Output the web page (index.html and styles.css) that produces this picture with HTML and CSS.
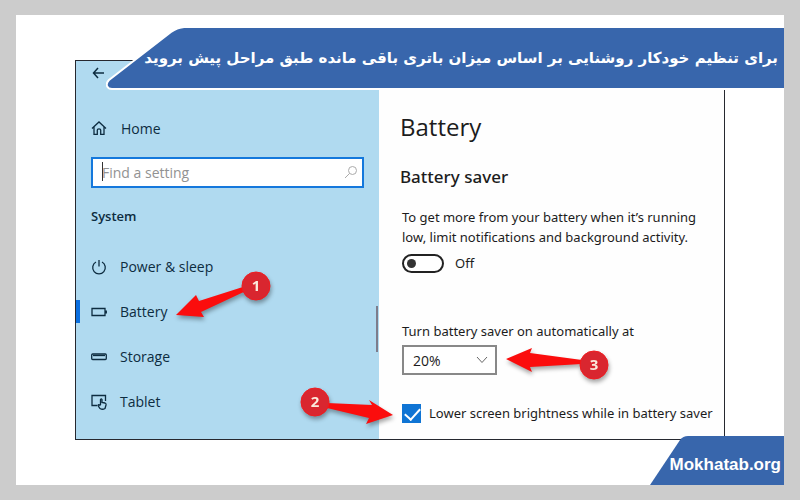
FILE: index.html
```html
<!DOCTYPE html>
<html lang="en">
<head>
  <meta charset="UTF-8" />
  <meta name="viewport" content="width=device-width, initial-scale=1.0" />
  <title>Battery saver settings</title>
  <link rel="stylesheet" href="styles.css">
</head>
<body>
  <div class="slide">
    <div class="window">
      <aside class="sidebar">
        <button class="back" type="button" aria-label="Back">
          <svg width="14" height="12" viewBox="0 0 14 12"><path d="M6 1 L1.500 6 L6 11 M1.500 6 H12" /></svg>
        </button>

        <a class="home" href="#">
          <svg class="icon" width="16" height="16" viewBox="0 0 16 16"><path d="M1 8.500 L8 2 L15 8.500 M3 7 V14.300 H6.300 V10 Q6.300 8.800 8 8.800 Q9.700 8.800 9.700 10 V14.300 H13 V7" /></svg>
          <span>Home</span>
        </a>

        <div class="search">
          <input type="text" placeholder="Find a setting" aria-label="Find a setting">
          <span class="caret"></span>
          <svg class="search-icon" width="14" height="14" viewBox="0 0 14 14"><circle cx="8.500" cy="5.500" r="4" /><path d="M5.600 8.400 L1 13" /></svg>
        </div>

        <h2 class="group">System</h2>
        <nav class="menu">
          <a href="#">
            <svg class="icon" width="16" height="16" viewBox="0 0 16 16"><path d="M5 3 A6.300 6.300 0 1 0 11 3 M8 1 V7.500" /></svg>
            <span>Power &amp; sleep</span>
          </a>
          <a class="active" href="#">
            <svg class="icon" width="16" height="16" viewBox="0 0 16 16"><path d="M1 4.500 H14 V11.500 H1 Z M15.300 6.500 V9.500" /></svg>
            <span>Battery</span>
            <svg class="callout callout-1" width="100" height="50" viewBox="0 0 100 50">
              <path d="M2 47 L22 27 L25 33 L72 18 L74 22 L27 44 L30 49 Z" />
              <circle cx="82" cy="18" r="14" />
              <text x="82" y="23">1</text>
            </svg>
          </a>
          <a href="#">
            <svg class="icon" width="16" height="16" viewBox="0 0 16 16"><rect x="0.700" y="5" width="14.600" height="5.500" rx="1" /><path d="M2 6.500 H14" /></svg>
            <span>Storage</span>
          </a>
          <a href="#">
            <svg class="icon" width="16" height="16" viewBox="0 0 16 16"><path d="M6 11.500 H1 V1.500 H14.500 V7 M9.500 11 V5.500 Q10.300 4.300 11 5.500 V8.500 L14 9 Q15.300 9.500 15 11 L14 14.500 Q11.500 16 9 14.500 L7 11.500 Q7.300 10 9.500 11.500" /></svg>
            <span>Tablet</span>
          </a>
        </nav>
        <div class="scrollbar"></div>
      </aside>

      <main class="content">
        <h1>Battery</h1>
        <h2>Battery saver</h2>
        <div class="settings">
          <p>To get more from your battery when it’s running<br>low, limit notifications and background activity.</p>
          <div class="toggle-row">
            <input type="checkbox" role="switch" id="saver" class="toggle">
            <label for="saver">Off</label>
          </div>

          <label class="level-label" for="level">Turn battery saver on automatically at</label>
          <div class="level">
            <select id="level">
              <option>10%</option>
              <option selected>20%</option>
              <option>30%</option>
            </select>
            <svg class="chevron" width="12" height="8" viewBox="0 0 12 8"><path d="M1 1 L6 6.500 L11 1" /></svg>
            <svg class="callout callout-3" width="110" height="40" viewBox="0 0 110 40">
              <path d="M2 16 L28 5 L26 10 L78 17 L78 21 L26 24 L28 29 Z" />
              <circle cx="90" cy="22" r="14" />
              <text x="90" y="27">3</text>
            </svg>
          </div>

          <div class="check-row">
            <input type="checkbox" id="brightness" class="check" checked>
            <label for="brightness">Lower screen brightness while in battery saver</label>
            <svg class="callout callout-2" width="96" height="54" viewBox="0 0 96 54">
              <path d="M94 30 L70 15 L73 20 L28 18 L28 23 L70 33 L67 39 Z" />
              <circle cx="16" cy="17" r="14" />
              <text x="16" y="22">2</text>
            </svg>
          </div>
        </div>
      </main>
    </div>

    <header class="banner">
      <svg class="banner-edge" width="86" height="63" viewBox="0 -1 86 63">
        <path class="fill" d="M86 0 H78 Q71 0 65 4 L3 52 Q0 55 1 58 Q2 61 6 61 H86 Z" />
        <path class="line" d="M86 -1 H78 Q71 -0.500 65 4 L3 52 Q0 55 1 58 Q2 61 6 61 H86" />
      </svg>
      <p lang="fa" dir="rtl">برای تنظیم خودکار روشنایی بر اساس میزان باتری باقی مانده طبق مراحل پیش بروید</p>
    </header>

    <footer class="site">
      <svg width="134" height="49" viewBox="0 0 134 49"><path d="M0 49 L30 4 Q33 0 38 0 H134 V49 Z" /></svg>
      <a href="#">Mokhatab.org</a>
    </footer>
  </div>
</body>
</html>
```

FILE: styles.css
```css
* {
  box-sizing: border-box;
}
body {
  margin: 0;
  padding: 15px 16px;
  min-height: 100vh;
  display: flex;
  background-color: #ccc;
  font-family: "Noto Sans", "Open Sans", sans-serif;
  font-size: 13px;
  color: #1c1c1c;
}
h1, h2, p {
  margin: 0;
}
a {
  color: inherit;
  text-decoration: none;
}
svg {
  display: block;
  fill: none;
  stroke: currentColor;
}
.slide {
  position: relative;
  flex: 1;
  min-width: 0;
  padding: 45px 59px;
  background: white;
}
.window {
  display: flex;
  min-height: 380px;
  border: 1px solid #26282f;
  background: #fefefe;
}

/* left panel */
.sidebar {
  position: relative;
  flex: 0 0 303px;
  padding: 0 15px 12px;
  background: #b0daf0;
  color: #0d2c40;
  font-family: "Open Sans", sans-serif;
  font-size: 14px;
}
.back {
  display: flex;
  align-items: center;
  height: 24px;
  padding: 0 1px;
  border: 0;
  background: none;
  color: inherit;
}
.back svg {
  stroke-width: 1.5;
}
.home {
  display: flex;
  align-items: center;
  gap: 14px;
  height: 30px;
  margin-top: 28px;
}
.icon {
  flex: none;
  stroke-width: 1.3;
}
.search {
  position: relative;
  margin-top: 14px;
}
.search input {
  display: block;
  width: 100%;
  height: 31px;
  padding: 0 32px 0 9px;
  border: 2px solid #1478dc;
  border-radius: 0;
  background: white;
  font: inherit;
}
.search input::placeholder {
  color: #929292;
  opacity: 1;
}
.caret {
  position: absolute;
  left: 11px;
  top: 5px;
  width: 1px;
  height: 19px;
  background: #333;
}
.search-icon {
  position: absolute;
  right: 6px;
  top: 8px;
  color: #aaa;
}
.group {
  margin-top: 14px;
  font-size: 13px;
  line-height: 28px;
  font-weight: 600;
}
.menu {
  margin: 14px -15px 0;
}
.menu a {
  position: relative;
  display: flex;
  align-items: center;
  gap: 13px;
  height: 45px;
  padding: 0 15px;
}
.menu .active::before {
  content: "";
  position: absolute;
  left: 0;
  top: 11px;
  width: 4px;
  height: 23px;
  background: #0b6fe0;
}
.scrollbar {
  position: absolute;
  right: 1px;
  top: 245px;
  width: 2px;
  height: 46px;
  background: #7d7d8c;
}

/* right panel */
.content {
  flex: 1;
  min-width: 0;
  padding: 47px 0 12px 21px;
}
.content h1 {
  font-family: "Open Sans", sans-serif;
  font-size: 24px;
  line-height: 38px;
  font-weight: 400;
}
.content h2 {
  margin-top: 16px;
  font-size: 17px;
  line-height: 30px;
  font-weight: 500;
}
.settings {
  padding: 15px 0 0 2px;
}
.settings p {
  line-height: 20px;
}
.toggle-row, .check-row {
  position: relative;
  display: flex;
  align-items: center;
  height: 20px;
}
.toggle-row {
  gap: 11px;
  margin-top: 6px;
}
.toggle, .check {
  appearance: none;
  position: relative;
  flex: none;
  margin: 0;
}
.toggle {
  width: 42px;
  height: 19px;
  border: 2px solid #222;
  border-radius: 10px;
  background: white;
}
.toggle::before {
  content: "";
  position: absolute;
  left: 3px;
  top: 3px;
  width: 9px;
  height: 9px;
  border-radius: 50%;
  background: #333;
}
.level-label {
  display: block;
  margin-top: 48px;
  line-height: 20px;
}
.level {
  position: relative;
  width: 95px;
  margin-top: 4px;
}
.level select {
  appearance: none;
  display: block;
  width: 100%;
  height: 30px;
  padding: 0 9px;
  border: 2px solid #888;
  border-radius: 0;
  background: white;
  color: inherit;
  font: 14px "Open Sans", sans-serif;
}
.chevron {
  position: absolute;
  right: 9px;
  top: 11px;
  color: #666;
}
.check-row {
  gap: 8px;
  margin-top: 28px;
  white-space: nowrap;
}
.check {
  width: 19px;
  height: 19px;
  background: #0f74d4;
}
.check::before {
  content: "";
  position: absolute;
  left: 6px;
  top: 1px;
  width: 7px;
  height: 13px;
  border: solid white;
  border-width: 0 2px 2px 0;
  transform: rotate(42deg);
}

/* numbered arrows */
.callout {
  position: absolute;
  z-index: 1;
  stroke: none;
  fill: #fb0d0d;
  filter: drop-shadow(1px 3px 2px rgba(0,0,0,0.35));
}
.callout circle {
  fill: #d9262f;
  stroke: #f01a1e;
}
.callout text {
  fill: #fbe9dc;
  font: bold 15px "Open Sans", sans-serif;
  text-anchor: middle;
}
.callout-1 {
  left: 98px;
  top: -21px;
}
.callout-2 {
  left: -103px;
  top: -18px;
}
.callout-3 {
  left: 102px;
  top: -2px;
}

/* title strip over the window */
.banner {
  position: absolute;
  z-index: 2;
  left: 90px;
  right: 0;
  top: 12px;
  display: flex;
  height: 63px;
}
.banner::before {
  content: "";
  position: absolute;
  z-index: -1;
  inset: 0 0 0 85px;
  border-top: 1px solid white;
  border-bottom: 2px solid white;
  background: #3866ac;
}
.banner-edge {
  flex: none;
}
.banner .fill {
  fill: #3866ac;
  stroke: none;
}
.banner .line {
  stroke: white;
  stroke-width: 2;
}
.banner p {
  flex: 1;
  min-width: 0;
  margin-left: -50px;
  padding-right: 6px;
  color: white;
  font: bold 15px/62px "DejaVu Sans", sans-serif;
  white-space: nowrap;
}
.site {
  position: absolute;
  right: 0;
  bottom: 0;
  padding: 0 3px 0 20px;
  color: white;
}
.site svg {
  position: absolute;
  right: 0;
  bottom: 0;
  fill: #3866ac;
  stroke: none;
}
.site a {
  position: relative;
  display: block;
  height: 49px;
  font: bold 17px/58px "Liberation Sans", Arial, sans-serif;
}
```
